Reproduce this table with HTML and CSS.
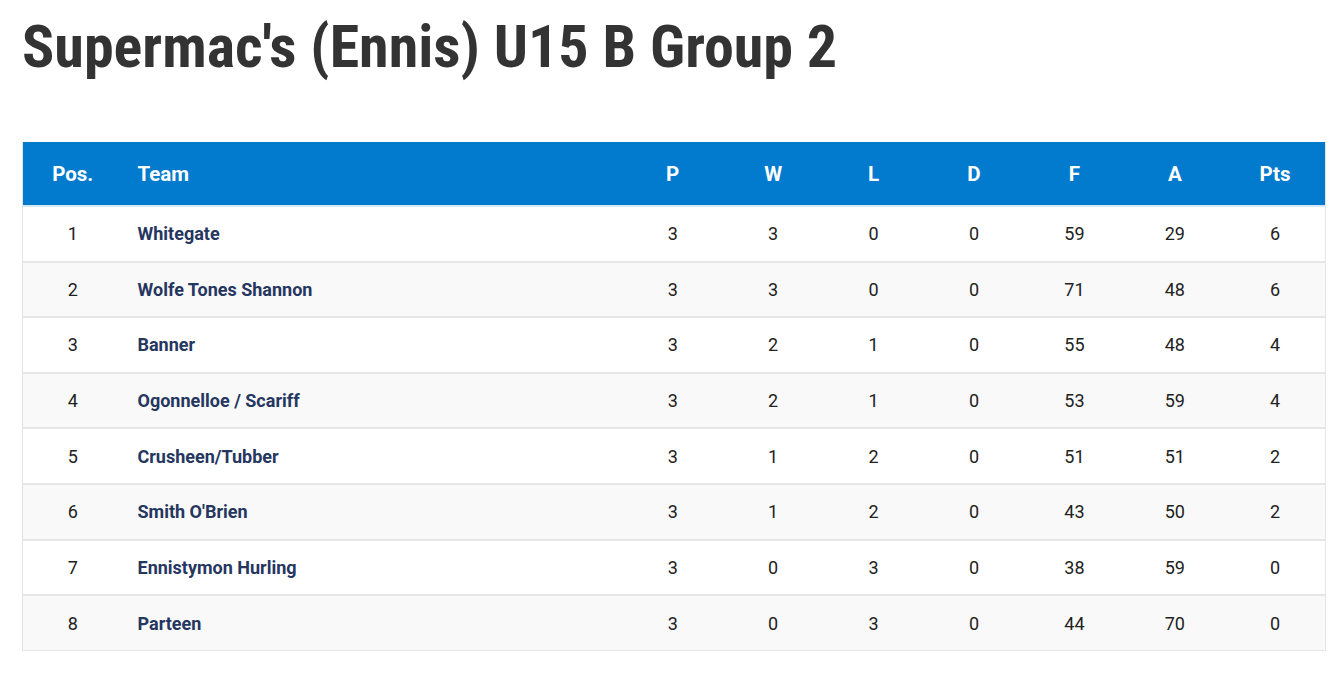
FILE: index.html
```html
<!DOCTYPE html>
<html>
<head>
<meta charset="utf-8">
<link rel="stylesheet" href="styles.css">
</head>
<body>
<h1 class="title">Supermac's (Ennis) U15 B Group 2</h1>
<table class="league">
  <thead>
    <tr><th class="pos">Pos.</th><th class="team">Team</th><th>P</th><th>W</th><th>L</th><th>D</th><th>F</th><th>A</th><th>Pts</th></tr>
  </thead>
  <tbody>
    <tr><td class="pos">1</td><td class="team">Whitegate</td><td>3</td><td>3</td><td>0</td><td>0</td><td>59</td><td>29</td><td>6</td></tr>
    <tr><td class="pos">2</td><td class="team">Wolfe Tones Shannon</td><td>3</td><td>3</td><td>0</td><td>0</td><td>71</td><td>48</td><td>6</td></tr>
    <tr><td class="pos">3</td><td class="team">Banner</td><td>3</td><td>2</td><td>1</td><td>0</td><td>55</td><td>48</td><td>4</td></tr>
    <tr><td class="pos">4</td><td class="team">Ogonnelloe / Scariff</td><td>3</td><td>2</td><td>1</td><td>0</td><td>53</td><td>59</td><td>4</td></tr>
    <tr><td class="pos">5</td><td class="team">Crusheen/Tubber</td><td>3</td><td>1</td><td>2</td><td>0</td><td>51</td><td>51</td><td>2</td></tr>
    <tr><td class="pos">6</td><td class="team">Smith O'Brien</td><td>3</td><td>1</td><td>2</td><td>0</td><td>43</td><td>50</td><td>2</td></tr>
    <tr><td class="pos">7</td><td class="team">Ennistymon Hurling</td><td>3</td><td>0</td><td>3</td><td>0</td><td>38</td><td>59</td><td>0</td></tr>
    <tr><td class="pos">8</td><td class="team">Parteen</td><td>3</td><td>0</td><td>3</td><td>0</td><td>44</td><td>70</td><td>0</td></tr>
  </tbody>
</table>
</body>
</html>
```
FILE: styles.css
```css
html, body { margin: 0; padding: 0; background: #fff; }
body {
  padding: 0 13px 0 22px;
  font-family: Roboto, "Liberation Sans", sans-serif;
}
.title {
  margin: 0;
  padding-top: 14px;
  height: 142px;
  box-sizing: border-box;
  font-family: "Roboto Condensed", Roboto, sans-serif;
  font-stretch: condensed;
  font-weight: 700;
  font-size: 60px;
  line-height: 66px;
  color: #333;
}
.league {
  width: 1304px;
  border-collapse: collapse;
  table-layout: fixed;
  border: 1px solid #e5e5e5;
  border-top: none;
}
.league th {
  background: #027bce;
  color: #fff;
  font-weight: 700;
  font-size: 20.5px;
  height: 64px;
  padding: 0;
  text-align: center;
  border-bottom: 2px solid #d6e8f3;
  box-sizing: border-box;
}
.league td {
  height: 55.6px;
  padding: 0;
  text-align: center;
  font-size: 18px;
  color: #222;
  border-bottom: 2px solid #e6e6e6;
  box-sizing: border-box;
}
.league tbody tr:nth-child(even) td { background: #f9f9f9; }
.league tbody tr:last-child td { border-bottom: 1px solid #e5e5e5; }
.league .pos { width: 100px; }
.league .team { width: 500px; text-align: left; padding-left: 15px; }
.league td.team { font-weight: 700; color: #25365f; }
```
